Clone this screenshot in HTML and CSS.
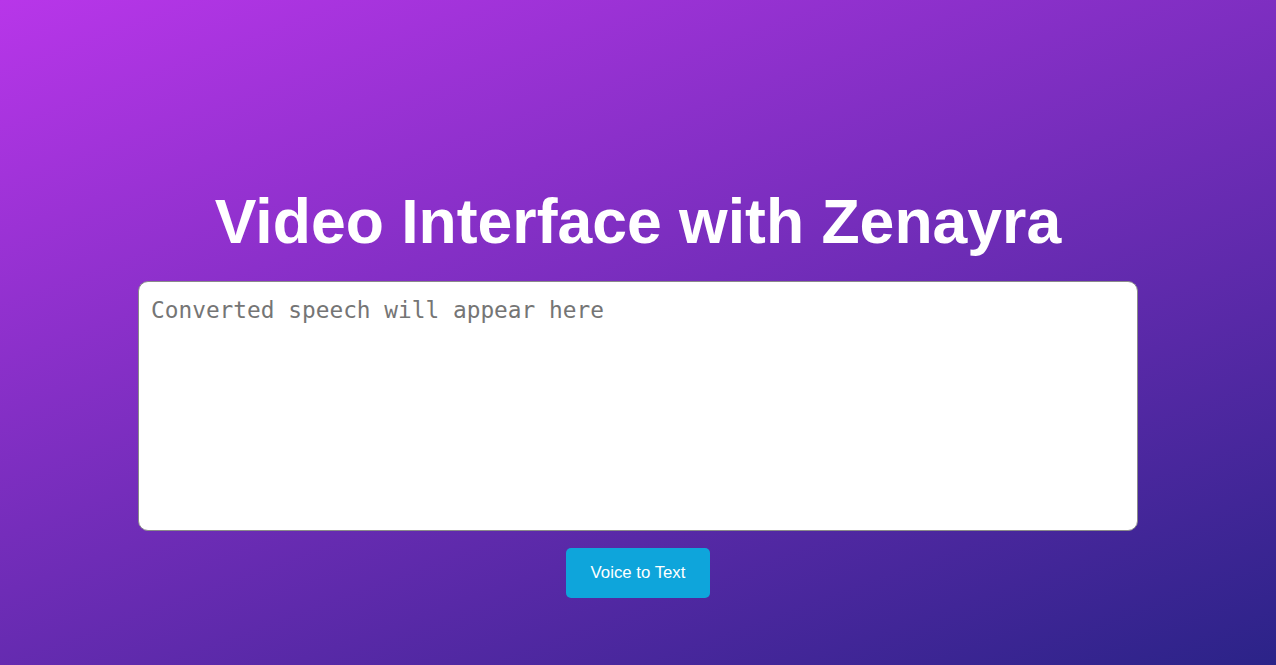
FILE: index.html
```html
<!DOCTYPE html>
<html lang="en">
<head>
<meta charset="utf-8">
<title>Video Interface with Zenayra</title>
<link rel="stylesheet" href="styles.css">
</head>
<body>
<main class="page">
  <h1 class="title">Video Interface with Zenayra</h1>
  <textarea class="output" placeholder="Converted speech will appear here"></textarea>
  <button class="btn" type="button">Voice to Text</button>
</main>
</body>
</html>
```

FILE: styles.css
```css
html, body {
  margin: 0;
  height: 100%;
}
body {
  background: linear-gradient(160deg, #b836e9 0%, #2b2388 100%);
  font-family: "Liberation Sans", Arial, sans-serif;
  overflow: hidden;
}
.page {
  display: flex;
  flex-direction: column;
  align-items: center;
  padding-top: 184px;
  box-sizing: border-box;
  height: 100%;
}
.title {
  margin: 0 0 23px;
  font-size: 62.5px;
  font-weight: bold;
  color: #ffffff;
  line-height: 74px;
}
.output {
  width: 1000px;
  height: 250px;
  box-sizing: border-box;
  border: 1px solid #8a8a8a;
  border-radius: 10px;
  padding: 15px 12px 12px;
  font-family: "DejaVu Sans Mono", monospace;
  font-size: 22.8px;
  resize: none;
  background: #ffffff;
  outline: none;
}
.output::placeholder {
  color: #757575;
}
.btn {
  margin-top: 17px;
  width: 144px;
  height: 50px;
  border: none;
  border-radius: 5px;
  background: #0ea5db;
  color: #ffffff;
  font-family: "Liberation Sans", Arial, sans-serif;
  font-size: 16.8px;
}
```
